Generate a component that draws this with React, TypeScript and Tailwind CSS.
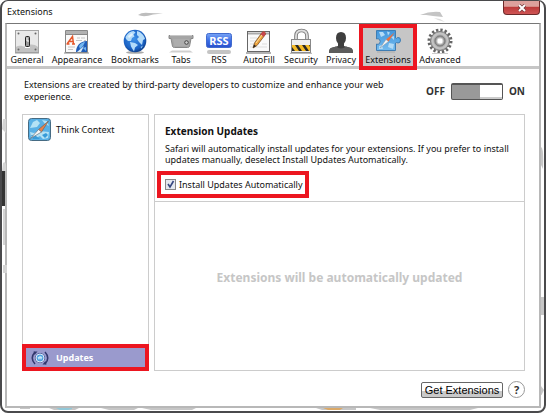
import { useState } from "react";
import type { ReactNode } from "react";

function Art({ children }: { children: ReactNode }) {
  return (
    <svg viewBox="0 0 26 26" className="block size-[26px] shrink-0" aria-hidden="true">
      {children}
    </svg>
  );
}

function GeneralIcon() {
  return (
    <Art>
      <rect x="1.5" y="2.5" width="23" height="22" fill="#e9e9e9" stroke="#a5a5a5" />
      <path d="M2 19c5-3 8 1 11-1s7-2 11 1v5H2z" fill="#c2c2c2" />
      <path d="M1 25h24" stroke="#999" />
      {[4.5, 21.5].map((x) =>
        [5.5, 21.5].map((y) => <circle key={`${x}-${y}`} cx={x} cy={y} r="1" fill="#666" />),
      )}
      <rect x="11.5" y="8.5" width="4" height="10" rx="1" fill="#999" stroke="#222" />
      <path d="M13 9.500v3.500h2" stroke="#fff" strokeWidth="1" fill="none" />
      <path d="M11 19.500h5" stroke="#fff" />
    </Art>
  );
}

function AppearanceIcon() {
  return (
    <Art>
      <path d="M1.500 24.500v-22h22v22z" fill="#fafafa" stroke="#888" />
      <path d="M2 3h21v3H2z" fill="#b2b2b2" />
      <path d="M2 6.500h21M0 25h25" stroke="#888" />
      <path d="M3 16 8.500 8.500 9.500 16M5 13.500h4M2.500 16h3M8 16h3" stroke="#e4572b" strokeWidth="1.500" fill="none" />
      <path d="M13 10h3m1 0h4M12 12.500h6m2 0h2M4 19h7M4 21.500h5" stroke="#c4c4c4" />
      <path d="M12 24c0-6 4-11 11-11v11z" fill="#1f5cb8" />
      <path d="M15 18c2-3 4-4 6-4l-2 4-3 3zM19 20l3-1v4z" fill="#73b6ee" />
      <path d="m13 24 7-6-3 6z" fill="#d8ecfb" />
    </Art>
  );
}

function GlobeIcon() {
  return (
    <Art>
      <defs>
        <radialGradient id="globe" cx=".45" cy=".4" r=".65">
          <stop offset="0" stopColor="#3f93ea" />
          <stop offset=".7" stopColor="#1b62c4" />
          <stop offset="1" stopColor="#0b3478" />
        </radialGradient>
      </defs>
      <ellipse cx="13" cy="24.500" rx="9" ry="1.300" fill="#aaa" />
      <circle cx="13" cy="13" r="11.300" fill="url(#globe)" />
      <path d="M3.500 9c2-4 5-6 8-6l2 1.500-2 2 1 2-2.500 1.500-1 3-3 0-2-2zM8 14l5 1 3 2-3 2.500-1 4-3-5zM15 3c4 1 7 4 8 8l-2 1-1 5-3-3-2-3 2-2-2-2z" fill="#b4dcfa" />
      <path d="M6 8l4-3 1 2-4 3z" fill="#fff" opacity=".6" />
      <path d="m18.500 19 2.500-1.500-1.500 3z" fill="#8dc3f4" />
    </Art>
  );
}

function TabsIcon() {
  return (
    <Art>
      <path d="M1 7.500h24v3h-2l-1.500 8q-.5 1-2 1h-13q-1.500 0-2-1l-1.500-8H1z" fill="#a5a5a5" stroke="#888" />
      <path d="M2 7.500h22" stroke="#c8c8c8" />
      <path d="M5 11h16l-1 7H6.500z" fill="#adadad" />
      <circle cx="18.500" cy="14.500" r="1.800" fill="#ccc" stroke="#444" />
      <path d="M1 24.500 4 22.500h18l3 2z" fill="#cfcfcf" />
    </Art>
  );
}

function RssIcon() {
  return (
    <Art>
      <defs>
        <linearGradient id="rss" x2="0" y2="1">
          <stop stopColor="#79a5f6" />
          <stop offset=".5" stopColor="#3d6ee6" />
          <stop offset="1" stopColor="#2a51cc" />
        </linearGradient>
      </defs>
      <rect x=".5" y="5.500" width="25" height="14" rx="2" fill="url(#rss)" stroke="#416bce" />
      <text x="13" y="16.500" textAnchor="middle" fontSize="11" fontWeight="700" fill="#fff" fontFamily="Noto Sans, sans-serif">
        RSS
      </text>
      <rect x="1" y="22" width="24" height="4" rx="2" fill="#c4c4c4" />
    </Art>
  );
}

function AutoFillIcon() {
  return (
    <Art>
      <rect x="1.500" y="3.500" width="22" height="20" fill="#fafafa" stroke="#666" />
      <path d="M2 5.500h21" stroke="#aaa" strokeWidth="2" />
      <path d="M4 10h7M4 13h6M4 16h5m7 0h5M4 19h17" stroke="#ddd" />
      <path d="M0 25h25" stroke="#999" strokeWidth="1.500" />
      <path d="m7 20 1.500-5L16 4.500q2-2 3.500.5.500 1-.5 2L11 17.500z" fill="#eea33c" stroke="#76512c" strokeWidth=".8" />
      <path d="m14.500 6.500 1.500-2q2-2 3.500.5.500 1-.5 2l-1.500 2z" fill="#c7464c" />
      <path d="m7 20 1-3.500 2 1.500z" fill="#222" />
      <path d="m10 15 6-8" stroke="#ffe09a" />
    </Art>
  );
}

function LockIcon() {
  return (
    <Art>
      <path d="M8 12V8q0-5.500 5.500-5.500T19 8v4" fill="none" stroke="#777" strokeWidth="3.600" />
      <path d="M8 12V8q0-5.500 5.500-5.500T19 8v4" fill="none" stroke="#ddd" strokeWidth="1.800" />
      <rect x="3.500" y="11.500" width="19" height="13" fill="#eee" stroke="#888" />
      <path d="M4 17h18v6H4z" fill="#272727" />
      <path d="M4 17h3l4 6H7l-3-4zM10 17h4l4 6h-4zM17 17h4l1 2v4h-1z" fill="#f4ba25" />
      <path d="M2 25.300h22" stroke="#aaa" />
    </Art>
  );
}

function PrivacyIcon() {
  return (
    <Art>
      <path d="M8 10q0-6 5-6t5 6q0 4-2 5.500v2.500l7 2q2 1 2 5H1q0-4 2-5l7-2v-2.500Q8 14 8 10z" fill="#3e3e3e" />
      <path d="M1 25q0-4 2-5l5-1.500q5 4 10 0l5 1.500q2 1 2 5z" fill="#5c5c5c" />
    </Art>
  );
}

function PuzzleIcon() {
  return (
    <Art>
      <defs>
        <linearGradient id="puzzle" x2="0" y2="1">
          <stop stopColor="#4296dc" />
          <stop offset="1" stopColor="#74bbee" />
        </linearGradient>
      </defs>
      <path d="M1.500 2.500h19v7.500q1 1 2-.5 3-.5 3 2.500T23 15q-1.500-1-2.500 0v7.500h-19V16q1.500 1 3-.5 1.500-2 0-4-1.500-1.500-3-.5z" fill="url(#puzzle)" stroke="#3f7db3" />
      <path d="M4 4h4l2 3-4 2zM14 15l5 1-1 5-5-2zM12 3.500l3 1-2 3zM4 18l3-1 1 4H4zM16 9l3-1v4z" fill="#b3dbf6" />
      <path d="m19.500 4.500-6 9-2.500-2z" fill="#ec6d3a" />
      <path d="m5 20 6-8.500 2.500 2z" fill="#f4f4f4" stroke="#8293a2" strokeWidth=".5" />
      <path d="M2 24h18" stroke="#aaa" />
    </Art>
  );
}

function GearIcon() {
  return (
    <Art>
      <circle cx="13" cy="13" r="11" fill="none" stroke="#666" strokeWidth="3" strokeDasharray="2.320 2" />
      <circle cx="13" cy="13" r="9.500" fill="#aaa" stroke="#777" />
      <circle cx="13" cy="13" r="7.500" fill="none" stroke="#c4c4c4" strokeWidth="2" />
      <circle cx="13" cy="13" r="5" fill="#a4a4a4" stroke="#777" />
      <circle cx="13" cy="13" r="3" fill="#fff" stroke="#d5d5d5" />
      <path d="M5 25.500h16" stroke="#ccc" />
    </Art>
  );
}

function CompassIcon() {
  return (
    <svg viewBox="0 0 23 23" className="size-[23px] shrink-0" aria-hidden="true">
      <rect x=".5" y=".5" width="22" height="22" rx="3" fill="#59b0e5" stroke="#466b83" />
      <path d="M2 10 5 4l4-2 3 3-3 4zM14 2l5 1 2 5-4-2zM2 14l4 1 5-2 10 1-1 6-5 1-3-3-4 2-5-1z" fill="#b4e2f5" />
      <path d="m3 17 5 1 4 3H5zM14 17l4-2 2 2-3 3z" fill="#389bd8" />
      <path d="m20.500 3-7 11-3-2.500z" fill="#ec8147" stroke="#6f6662" strokeWidth=".7" />
      <path d="m2.500 20.500 8-9 3 2.500z" fill="#f7f7f7" stroke="#63747e" strokeWidth=".7" />
    </svg>
  );
}

function UpdatesIcon() {
  return (
    <svg viewBox="0 0 18 16" className="h-4 w-[18px] shrink-0" aria-hidden="true">
      <circle cx="9" cy="8" r="5" fill="#4c5c98" />
      <circle cx="9" cy="8" r="4" fill="#4f9fe0" stroke="#dcecf8" />
      <path d="M6.500 7.500 8 10l1-2 1 2 1.500-3-2.500-1z" fill="#c4e7f8" />
      <path d="M4 14Q-1.500 8 4 2M14 2q5.500 6 0 12" fill="none" stroke="#31366c" strokeWidth="1.500" />
      <path d="M2.500 1.500h4L3.500 5zM11.500 14.500h4l-1-3.500z" fill="#31366c" />
    </svg>
  );
}

const tabs = [
  { label: "General", icon: <GeneralIcon />, width: "w-[40px]" },
  { label: "Appearance", icon: <AppearanceIcon />, width: "w-[60px]" },
  { label: "Bookmarks", icon: <GlobeIcon />, width: "w-[56px]" },
  { label: "Tabs", icon: <TabsIcon />, width: "w-[36px]" },
  { label: "RSS", icon: <RssIcon />, width: "w-[40px]" },
  { label: "AutoFill", icon: <AutoFillIcon />, width: "w-[40px]" },
  { label: "Security", icon: <LockIcon />, width: "w-[44px]" },
  { label: "Privacy", icon: <PrivacyIcon />, width: "w-[36px]" },
  { label: "Extensions", icon: <PuzzleIcon />, width: "w-[58px]" },
  { label: "Advanced", icon: <GearIcon />, width: "w-[46px]" },
];

function EdgeShadows() {
  return (
    <>
      <svg className="pointer-events-none absolute top-[8px] left-[135px] h-2 w-7" viewBox="0 0 28 8" aria-hidden="true">
        <path d="M1 6Q5 3 12 4l14 .5-10 1Q7 8.500 1 6z" fill="#bdbdbd" />
      </svg>
      <svg className="pointer-events-none absolute top-[9px] left-[418px] h-3 w-7" viewBox="0 0 28 12" aria-hidden="true">
        <path d="M0 5Q10 1 20 2l3 5-10-1-7-1z" fill="#c4c4c4" />
        <path d="m14 8 6 1 5 3-7-2z" fill="#ddd" />
      </svg>
      <svg className="pointer-events-none absolute top-[110px] left-0 h-[180px] w-[5px]" viewBox="0 0 5 180" aria-hidden="true">
        <path d="M1 8h3v14l-4-4zM1 52q4-3 3 8H0zM1 98h2v36H1zM1 154h4v8H1z" fill="#d4d4d4" />
        <path d="M0 60h3v35H0z" fill="#333" />
      </svg>
      <svg className="pointer-events-none absolute top-[144px] right-0 h-[250px] w-[3px]" viewBox="0 0 3 250" aria-hidden="true">
        <path d="M0 2q3 1 2 22l-2-4zM0 152h3v18H0zM0 241l3 4-3 6z" fill="#c6c6c6" />
      </svg>
      <svg className="pointer-events-none absolute bottom-0 left-0 h-[3px] w-[480px]" viewBox="0 0 480 3" aria-hidden="true">
        <path d="M18 0h10v1H18zM47 0h30l-4 2H52zM99 0h37l-4 2h-25zM140 0h54l-4 2h-41zM314 0h40v2h-34zM368 0h108l-8 2h-90z" fill="#c6c6c6" />
        <path d="M54 0h16v1l-4 1h-8z" fill="#91c8d8" />
        <path d="M321 0h20l-3 2h-12z" fill="#dba866" />
      </svg>
    </>
  );
}

export default function App() {
  const [active, setActive] = useState("Extensions");
  const [enabled, setEnabled] = useState(false);
  const [auto, setAuto] = useState(true);

  return (
    <div className="relative flex min-h-screen flex-col rounded-lg border-2 border-t border-[#4a4a4c] bg-white font-['Noto_Sans','Open_Sans',sans-serif] text-[9px] leading-3 text-[#111]">
      <EdgeShadows />
      <header className="flex h-[22px] shrink-0 items-center justify-between pr-1 pl-[5px]">
        <h1>Extensions</h1>
        <button
          type="button"
          aria-label="Close"
          className="flex h-[14px] w-[37px] items-center justify-center self-start rounded-b border border-t-0 border-[#6d2a2a] bg-linear-to-b from-[#dda09c] from-40% via-[#bd3b3b] via-50% to-[#cf5555]"
        >
          <svg viewBox="0 0 10 8" className="h-2 w-[10px]" aria-hidden="true">
            <path d="m2 1 6 6M8 1 2 7" stroke="#70393b" strokeWidth="3.400" />
            <path d="m2 1 6 6M8 1 2 7" stroke="#fff" strokeWidth="2" />
          </svg>
        </button>
      </header>

      <main className="mx-[3px] mb-[3px] flex flex-1 flex-col border-2 border-t border-[#b8b8b8] border-t-[#777]">
        <nav className="flex h-[45px] border-b-3 border-[#c6c6c6]">
          {tabs.map((tab) => {
            const on = tab.label === active;
            return (
              <button
                key={tab.label}
                type="button"
                onClick={() => setActive(tab.label)}
                className={`flex shrink-0 flex-col items-center whitespace-nowrap ${tab.width} ${
                  on ? "z-10 h-[46px] border-4 border-[#ec1620] bg-[#c6c6c6]" : "h-[42px] pt-1"
                }`}
              >
                {tab.icon}
                {tab.label}
              </button>
            );
          })}
        </nav>

        <div className="flex flex-1 flex-col pt-[10px] pr-[14px] pb-2 pl-[15px]">
          <div className="flex items-center justify-between pb-[11px] pl-[2px]">
            <p className="max-w-[370px]">
              Extensions are created by third-party developers to customize and enhance your web experience.
            </p>
            <div className="flex items-center gap-[6px] text-[10px] font-bold text-[#333]">
              <span>OFF</span>
              <button
                type="button"
                role="switch"
                aria-checked={enabled}
                aria-label="Extensions"
                onClick={() => setEnabled(!enabled)}
                className={`flex h-[17px] w-[52px] rounded-xs border border-t-2 border-[#555] bg-[#999] ${enabled ? "justify-start" : "justify-end"}`}
              >
                <span className="h-full w-[22px] border-b-2 border-[#ccc] bg-white" />
              </button>
              <span>ON</span>
            </div>
          </div>

          <div className="flex flex-1 gap-[5px]">
            <aside className="flex w-[127px] shrink-0 flex-col justify-between border border-[#ccc]">
              <button type="button" className="flex items-center gap-[5px] px-[5px] pt-[3px] text-left">
                <CompassIcon />
                Think Context
              </button>
              <button
                type="button"
                className="-mx-px -mb-px flex h-[27px] items-center gap-[7px] border-4 border-[#ec1620] bg-[#9a9acd] pl-[5px] font-bold text-white"
              >
                <UpdatesIcon />
                Updates
              </button>
            </aside>

            <section className="flex min-w-0 flex-1 flex-col border border-[#ccc]">
              <div className="border-b border-[#ccc] px-[10px] pt-[10px] pb-[3px]">
                <h2 className="text-[10px] leading-3 font-bold">Extension Updates</h2>
                <p className="mt-[6px] max-w-[345px] leading-[11px]">
                  Safari will automatically install updates for your extensions. If you prefer to install updates
                  manually, deselect Install Updates Automatically.
                </p>
                <label className="mt-[6px] -ml-2 flex h-[27px] w-[152px] items-center gap-[3px] border-4 border-[#ec1620] pl-1 whitespace-nowrap">
                  <span className="grid">
                    <input
                      type="checkbox"
                      checked={auto}
                      onChange={(e) => setAuto(e.target.checked)}
                      className="col-start-1 row-start-1 size-[11px] appearance-none border border-[#888] bg-[#e4e8ef]"
                    />
                    {auto && (
                      <svg viewBox="0 0 11 11" className="pointer-events-none col-start-1 row-start-1 size-[11px]" aria-hidden="true">
                        <path d="m3 5 2 3 3.500-6" fill="none" stroke="#34457f" strokeWidth="1.600" />
                      </svg>
                    )}
                  </span>
                  Install Updates Automatically
                </label>
              </div>
              <p className="flex flex-1 items-center justify-center pb-4 text-[12px] font-bold text-[#c6c6c6]">
                Extensions will be automatically updated
              </p>
            </section>
          </div>

          <footer className="flex items-center justify-end gap-[5px] pt-[10px]">
            <button
              type="button"
              className="h-4 w-[82px] rounded-xs border border-[#666] bg-linear-to-b from-white from-60% to-[#c9c9c9] to-60% font-['Liberation_Sans',sans-serif] text-[11px] leading-3 whitespace-nowrap text-black"
            >
              Get Extensions
            </button>
            <button
              type="button"
              aria-label="Help"
              className="flex size-[17px] items-center justify-center rounded-full border border-[#999] text-[11px] font-bold text-[#333]"
            >
              ?
            </button>
          </footer>
        </div>
      </main>
    </div>
  );
}
